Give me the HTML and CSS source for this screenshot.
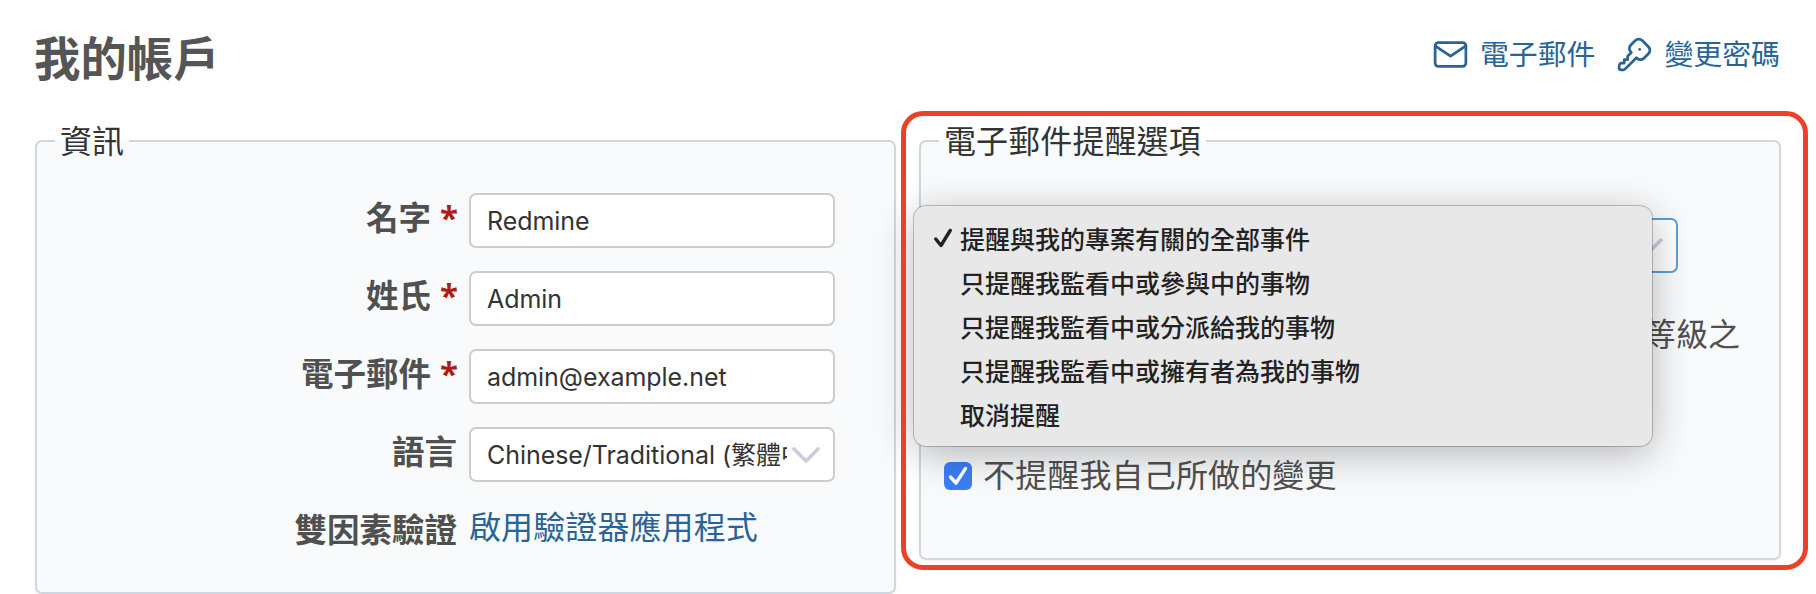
FILE: index.html
```html
<!DOCTYPE html>
<html lang="zh-Hant">
<head>
<meta charset="utf-8">
<title>我的帳戶</title>
<link rel="stylesheet" href="styles.css">
</head>
<body>
<header class="top">
  <h2 class="title">我的帳戶</h2>
  <nav class="contextual">
    <a class="action" href="#"><svg class="icon" viewBox="0 0 24 24"><path d="M3 7a2 2 0 0 1 2-2h14a2 2 0 0 1 2 2v10a2 2 0 0 1-2 2H5a2 2 0 0 1-2-2z"/><path d="m3 7 9 6 9-6"/></svg>電子郵件</a>
    <a class="action" href="#"><svg class="icon" viewBox="0 0 24 24"><path d="m16.555 3.843 3.602 3.602a2.877 2.877 0 0 1 0 4.069l-2.643 2.643a2.877 2.877 0 0 1-4.069 0l-.301-.301-6.558 6.558a2 2 0 0 1-1.239.578L5.172 21H4a1 1 0 0 1-.993-.883L3 20v-1.172a2 2 0 0 1 .467-1.284l.119-.13L4 17h2v-2h2v-2l2.144-2.144-.301-.301a2.877 2.877 0 0 1 0-4.069l2.643-2.643a2.877 2.877 0 0 1 4.069 0z"/><path d="M15 9h.01"/></svg>變更密碼</a>
  </nav>
</header>
<main class="columns">
  <fieldset class="box info">
    <legend>資訊</legend>
    <div class="form">
      <label class="label">名字<span class="required">*</span></label><div class="field">Redmine</div>
      <label class="label">姓氏<span class="required">*</span></label><div class="field">Admin</div>
      <label class="label">電子郵件<span class="required">*</span></label><div class="field">admin@example.net</div>
      <label class="label">語言</label><div class="field select"><span class="value">Chinese/Traditional (繁體中文)</span><svg class="chevron" viewBox="0 0 28 16"><path d="m2 2 12 12L26 2"/></svg></div>
      <label class="label">雙因素驗證</label><a class="link" href="#">啟用驗證器應用程式</a>
    </div>
  </fieldset>
  <fieldset class="box mail">
    <legend>電子郵件提醒選項</legend>
    <div class="field select active"><span class="value"></span><svg class="chevron" viewBox="0 0 28 16"><path d="m2 2 12 12L26 2"/></svg></div>
    <p class="note">等級之</p>
    <label class="check"><svg class="tick" viewBox="0 0 28 28"><path d="m6.500 15 5.500 6 9.500-14.500"/></svg>不提醒我自己所做的變更</label>
  </fieldset>
</main>
<ul class="menu">
  <li><svg class="mark" viewBox="0 0 18 20"><path d="m1.800 11 5.200 6.500L16.200 2.500"/></svg>提醒與我的專案有關的全部事件</li>
  <li>只提醒我監看中或參與中的事物</li>
  <li>只提醒我監看中或分派給我的事物</li>
  <li>只提醒我監看中或擁有者為我的事物</li>
  <li>取消提醒</li>
</ul>
<div class="highlight"></div>
</body>
</html>
```
FILE: styles.css
```css
* { box-sizing: border-box; }
body {
  margin: 0;
  width: 1816px;
  height: 594px;
  position: relative;
  overflow: hidden;
  background: #fff;
  color: #505050;
  font: 32px/34px "Noto Sans CJK TC", sans-serif;
}
a { color: #2a6496; text-decoration: none; }
.top {
  height: 122px;
  padding: 30px 36px 0 34px;
  display: flex;
  justify-content: space-between;
  align-items: flex-start;
}
.title { margin: 0; font-size: 46.400px; line-height: 52px; font-weight: 700; color: #555; }
.contextual { display: flex; gap: 22px; }
.action { display: flex; align-items: center; font-size: 28.900px; line-height: 44px; height: 48px; padding-bottom: 4px; }
.icon { width: 41px; height: 41px; margin: 5px 9px 0 -3px; fill: none; stroke: currentColor; stroke-width: 1.600; stroke-linecap: round; stroke-linejoin: round; }

.columns { display: flex; align-items: flex-start; gap: 23px; padding-left: 35px; }
.box {
  margin: 0;
  min-width: 0;
  padding: 0;
  border: 2px solid #d0d7de;
  border-radius: 7px;
  background: #f9fafc;
  box-shadow: 0 2px 3px rgba(0, 0, 0, .04);
}
.box legend { margin-left: 18px; padding: 0 5px 4px; height: 38px; line-height: 34px; letter-spacing: .1px; color: #333; }
.info { width: 861px; height: 472px; }
.mail { width: 862px; height: 438px; }
.form { display: grid; grid-template-columns: 420px 366px; column-gap: 12px; grid-auto-rows: 78px; padding-top: 33px; }
.label { padding-top: 6px; text-align: right; font-weight: 700; font-size: 32.500px; }
.required { margin: 0 -1px 0 9px; color: #b01c12; font: 700 33px/30px "Open Sans", sans-serif; }
.field {
  height: 55px;
  padding: 0 16px;
  border: 2px solid #ccc;
  border-radius: 7px;
  background: #fff;
  color: #333;
  font: 25px/52px Inter, "Noto Sans CJK TC", sans-serif;
  letter-spacing: -.05px;
}
.select { display: flex; align-items: center; justify-content: space-between; padding-right: 13px; }
.value { width: 300px; height: 52px; overflow: hidden; white-space: nowrap; }
.chevron { width: 28px; height: 16px; fill: none; stroke: #ccccde; stroke-width: 3.600; stroke-linecap: round; stroke-linejoin: round; }
.link { padding-top: 3px; letter-spacing: .1px; }
.active { width: 734px; margin: 58px 0 0 23px; border-color: #5b9fd6; }
.note { margin: 42px 39px 0; text-align: right; }
.check { display: flex; align-items: center; gap: 11px; margin: 106px 0 0 23px; letter-spacing: .15px; }
.tick { width: 28px; height: 28px; margin-top: 7px; border-radius: 6px; background: #3b7ef6; fill: none; stroke: #fff; stroke-width: 3.400; stroke-linecap: round; stroke-linejoin: round; }

.menu {
  position: absolute;
  left: 914px;
  top: 206px;
  width: 738px;
  height: 240px;
  margin: 0;
  padding: 10px 0 0 46px;
  list-style: none;
  border-radius: 12px;
  background: #e8e8e8;
  color: #222;
  font-size: 25px;
  line-height: 44px;
  font-weight: 500;
  box-shadow: 0 0 0 1px rgba(0, 0, 0, .22), 0 8px 40px rgba(0, 0, 0, .28);
}
.menu li { display: flex; align-items: center; height: 44px; }
.mark { width: 18px; height: 20px; margin-left: -26px; margin-right: 8px; fill: none; stroke: #222; stroke-width: 3.400; stroke-linecap: round; stroke-linejoin: round; }
.highlight { position: absolute; left: 901px; top: 111px; width: 907px; height: 459px; border: 5px solid #ec4126; border-radius: 22px; }
```
